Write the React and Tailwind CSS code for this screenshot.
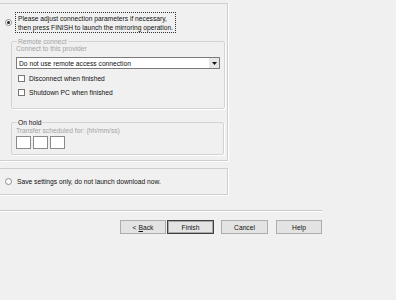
const Radio = ({ checked }) => (
  <span className="w-[7px] h-[7px] rounded-full border border-[#8a8a8a] bg-white flex items-center justify-center shrink-0">
    {checked && <span className="w-[3px] h-[3px] rounded-full bg-[#222]" />}
  </span>
);

const Check = () => (
  <span className="w-[7px] h-[7px] border border-[#777] bg-white shrink-0" />
);

const Btn = ({ children, primary, className = "" }) => (
  <button
    className={`h-[14px] flex items-center justify-center bg-[#e3e3e3] border ${
      primary ? "border-[#404040] shadow-[inset_0_0_0_1px_#a8a8a8]" : "border-[#acacac]"
    } text-[#111] ${className}`}
  >
    {children}
  </button>
);

function App() {
  return (
    <div
      className="w-[396px] h-[300px] bg-[#f0f0f0] pt-[3px] text-[6.7px] leading-[9px] text-[#111]"
      style={{ fontFamily: '"Liberation Sans", Arial, sans-serif' }}
    >
      {/* main panel */}
      <div className="w-[228px] h-[158px] border-t border-r border-b border-[#cfcfcf] shadow-[1px_1px_0_#ffffff]">
        <div className="flex items-center pl-[5px] pt-[8px]">
          <Radio checked />
          <div className="ml-[3px] border border-dotted border-[#333] px-[2px] py-[0.5px]">
            <div>Please adjust connection parameters if necessary,</div>
            <div>then press FINISH to launch the mirroring operation.</div>
          </div>
        </div>

        {/* Remote connect */}
        <fieldset className="ml-[11px] mt-[4px] w-[213px] h-[72px] border border-[#d3d3d3] rounded-[2px] shadow-[1px_1px_0_#ffffff] px-[4px]">
          <legend className="px-[1px] ml-[1px] text-[#a3a3a3]">Remote connect</legend>
          <div className="text-[#a3a3a3] -mt-[2px]">Connect to this provider</div>
          <div className="mt-[4px] w-[204px] h-[12px] bg-white border border-[#7a7a7a] flex items-center justify-between pl-[2px]">
            <span>Do not use remote access connection</span>
            <span className="w-[10px] h-[10px] bg-[#e6e6e6] flex items-center justify-center">
              <svg width="5" height="3" viewBox="0 0 5 3">
                <path d="M0 0h5L2.5 3z" fill="#111" />
              </svg>
            </span>
          </div>
          <div className="flex items-center gap-[4px] mt-[5px] pl-[2px]">
            <Check />
            <span>Disconnect when finished</span>
          </div>
          <div className="flex items-center gap-[4px] mt-[5px] pl-[2px]">
            <Check />
            <span>Shutdown PC when finished</span>
          </div>
        </fieldset>

        {/* On hold */}
        <fieldset className="ml-[11px] mt-[9px] w-[213px] h-[37px] border border-[#d3d3d3] rounded-[2px] shadow-[1px_1px_0_#ffffff] px-[4px]">
          <legend className="px-[1px] ml-[1px]">On hold</legend>
          <div className="text-[#a3a3a3] -mt-[1px]">Transfer scheduled for: (hh/mm/ss)</div>
          <div className="flex gap-[2px] mt-[1px]">
            <span className="w-[15px] h-[13px] bg-white border border-[#8a8a8a]" />
            <span className="w-[15px] h-[13px] bg-white border border-[#8a8a8a]" />
            <span className="w-[15px] h-[13px] bg-white border border-[#8a8a8a]" />
          </div>
        </fieldset>
      </div>

      {/* second option */}
      <div className="mt-[7px] w-[228px] h-[27px] border-t border-r border-b border-[#cfcfcf] shadow-[1px_1px_0_#ffffff] flex items-center pl-[5px]">
        <Radio />
        <span className="ml-[5px]">Save settings only, do not launch download now.</span>
      </div>

      {/* separator */}
      <div className="mt-[15px] w-[322px] h-[2px] border-t border-[#c8c8c8] border-b border-b-white" />

      {/* buttons */}
      <div className="flex mt-[8px] pl-[120px]">
        <Btn className="w-[46px]">
          &lt; <span className="underline ml-[2px]">B</span>ack
        </Btn>
        <Btn primary className="w-[47px] ml-[1px]">Finish</Btn>
        <Btn className="w-[47px] ml-[7px]">Cancel</Btn>
        <Btn className="w-[46px] ml-[8px]">Help</Btn>
      </div>
    </div>
  );
}

export default App;
